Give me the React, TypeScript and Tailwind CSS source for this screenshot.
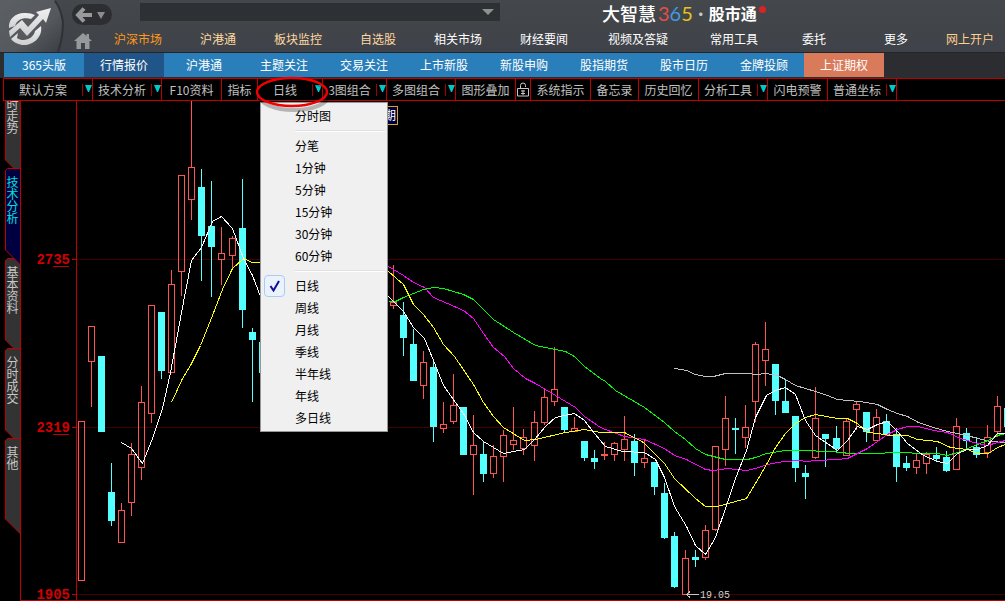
import type { ReactNode } from 'react';

const navItems = [
  { label: '沪深市场', style: 'w-20 text-[#ff9a1a]' },
  { label: '沪港通', style: 'w-20 text-[#ffd9a0]' },
  { label: '板块监控', style: 'w-20 text-[#ffd9a0]' },
  { label: '自选股', style: 'w-20 text-[#ffd9a0]' },
  { label: '相关市场', style: 'w-20 text-white' },
  { label: '财经要闻', style: 'w-[92px] text-white' },
  { label: '视频及答疑', style: 'w-24 text-white' },
  { label: '常用工具', style: 'w-24 text-white' },
  { label: '委托', style: 'w-16 text-white' },
  { label: '更多', style: 'w-[100px] text-white' },
  { label: '网上开户', style: 'w-12 text-[#ffcf8f]' },
];

const marketTabs = [
  '365头版', '行情报价', '沪港通', '主题关注', '交易关注', '上市新股',
  '新股申购', '股指期货', '股市日历', '金牌投顾', '上证期权',
];

const periodGroups = [
  ['分时图'],
  ['分笔', '1分钟', '5分钟', '15分钟', '30分钟', '60分钟'],
  ['日线', '周线', '月线', '季线', '半年线', '年线', '多日线'],
];

const sideTabs = [
  { label: '时走势', height: 78 },
  { label: '技术分析', height: 90, active: true },
  { label: '基本资料', height: 90 },
  { label: '分时成交', height: 90 },
  { label: '其他', height: 96, last: true },
];

// x, high, body top, body bottom, low, rising
type Candle = [number, number, number, number, number, 0 | 1];

const candles: Candle[] = [
  [81, 421, 421, 581, 581, 1], [91, 326, 326, 362, 407, 1], [101, 356, 356, 432, 432, 0],
  [111, 463, 492, 521, 526, 0], [121, 503, 510, 543, 543, 1], [131, 443, 454, 503, 516, 1],
  [141, 386, 402, 468, 480, 1], [151, 305, 305, 414, 423, 1], [161, 312, 312, 371, 379, 0],
  [171, 270, 284, 373, 373, 1], [181, 175, 175, 272, 296, 1], [191, 101, 167, 200, 220, 1],
  [201, 169, 187, 236, 281, 0], [211, 181, 226, 247, 297, 0], [221, 227, 253, 260, 285, 1],
  [232, 236, 238, 256, 268, 1], [242, 179, 228, 310, 328, 0], [252, 328, 332, 340, 402, 0],
  [262, 342, 342, 373, 373, 0], [393, 265, 302, 306, 309, 1], [403, 302, 315, 338, 356, 0],
  [413, 329, 344, 381, 381, 0], [423, 351, 362, 386, 399, 1], [433, 361, 367, 427, 442, 0],
  [443, 402, 424, 429, 433, 1], [453, 374, 405, 422, 424, 1], [463, 407, 407, 455, 455, 0],
  [473, 415, 445, 455, 495, 1], [483, 442, 454, 474, 482, 0], [493, 445, 456, 474, 478, 1],
  [503, 430, 435, 457, 482, 1], [513, 407, 440, 445, 450, 1], [523, 429, 437, 449, 455, 1],
  [534, 411, 422, 446, 461, 1], [544, 389, 397, 423, 425, 1], [554, 347, 389, 402, 406, 1],
  [564, 407, 407, 430, 432, 0], [574, 417, 428, 432, 432, 1], [584, 441, 441, 458, 461, 0],
  [594, 450, 458, 462, 469, 0], [604, 442, 454, 456, 460, 1], [614, 442, 443, 455, 461, 1],
  [624, 416, 439, 450, 461, 1], [634, 434, 441, 463, 476, 0], [644, 440, 458, 463, 468, 1],
  [654, 462, 462, 487, 495, 0], [664, 483, 493, 538, 539, 0], [674, 532, 536, 587, 588, 0],
  [685, 550, 558, 595, 595, 1], [695, 550, 557, 560, 567, 0], [705, 525, 530, 558, 560, 1],
  [715, 446, 446, 530, 531, 1], [725, 396, 418, 450, 466, 1], [735, 418, 428, 430, 454, 0],
  [745, 405, 427, 438, 448, 1], [755, 342, 344, 402, 422, 1], [765, 322, 349, 361, 386, 1],
  [775, 364, 364, 401, 415, 0], [785, 380, 401, 413, 413, 0], [795, 416, 416, 468, 482, 0],
  [805, 465, 473, 477, 499, 0], [815, 387, 418, 458, 459, 1], [825, 434, 434, 439, 467, 0],
  [836, 426, 438, 449, 452, 0], [846, 418, 421, 456, 456, 1], [856, 401, 404, 410, 430, 1],
  [866, 412, 412, 432, 442, 0], [876, 409, 417, 441, 441, 1], [886, 414, 421, 435, 435, 0],
  [896, 428, 434, 467, 482, 0], [906, 456, 463, 468, 471, 0], [916, 453, 460, 468, 474, 1],
  [926, 452, 454, 464, 474, 1], [936, 447, 455, 459, 461, 0], [946, 451, 457, 471, 472, 0],
  [956, 418, 426, 470, 470, 1], [966, 428, 433, 441, 448, 0], [976, 437, 447, 455, 458, 0],
  [987, 425, 437, 453, 458, 1], [997, 396, 406, 432, 437, 1], [1007, 408, 408, 427, 427, 0],
];

const averages = [
  {
    color: '#c0c0c0',
    points: '674,368 686,370 695,374 705,376 713,376 725,373 747,373 755,374 766,373 777,375 785,379 795,385 805,388 815,391 827,395 837,399 847,400 860,401 877,404 887,409 897,413 907,416 918,422 933,427 947,431 967,435 977,438 990,441 1005,442',
  },
  {
    color: '#00ff00',
    points: '388,301 395,301 403,297 423,289 433,287 443,288 463,294 473,299 483,309 493,319 513,332 535,345 555,349 565,351 574,356 584,366 600,378 605,381 615,390 644,407 664,422 674,431 685,439 695,448 705,454 725,459 747,459 755,457 766,453 785,450 800,450 830,451 850,453 880,453 890,452 910,452 913,453 937,453 947,455 957,452 967,448 977,444 990,439 997,435 1005,433',
  },
  {
    color: '#ff00ff',
    points: '388,266 403,275 413,282 424,287 433,297 447,303 463,310 473,318 483,333 493,347 504,356 513,368 525,378 535,383 555,395 575,407 584,416 600,427 605,429 624,436 644,439 664,448 674,455 686,459 705,469 713,470 727,468 746,470 755,468 767,464 783,461 800,460 805,461 817,460 837,459 847,458 857,453 867,448 877,441 887,434 897,429 907,426 918,426 933,430 947,432 960,438 977,443 987,445 997,442 1005,440',
  },
  {
    color: '#ffff00',
    points: '171,402 182,378 190,365 200,345 212,315 222,289 232,268 243,258 252,262 260,262',
  },
  {
    color: '#ffff00',
    points: '388,271 403,284 413,304 423,314 433,327 443,344 454,356 473,384 483,402 493,416 503,427 524,440 535,439 565,432 584,429 600,432 624,432 643,442 664,463 674,478 695,498 705,506 717,506 746,498 755,483 766,464 775,447 785,433 795,423 805,417 815,414 837,418 847,418 857,423 867,432 877,433 890,435 907,435 917,439 937,441 950,447 967,449 977,453 988,453 997,447 1005,444',
  },
  {
    color: '#ffffff',
    points: '121,442 131,448 142,463 152,438 162,408 170,372 175,345 181,312 191,260 201,247 212,221 221,216 232,228 243,258 252,275 260,296',
  },
  {
    color: '#ffffff',
    points: '388,296 403,311 413,327 424,338 433,360 443,385 455,402 463,413 473,432 483,441 493,447 503,453 513,451 524,449 534,439 545,426 555,417 564,415 574,413 584,420 594,433 605,446 622,451 644,452 655,459 664,477 674,506 686,526 695,545 705,554 715,537 727,502 735,478 746,450 755,417 766,395 775,390 785,387 795,394 805,420 815,435 837,450 847,440 857,426 867,429 877,424 887,421 897,431 907,443 923,455 937,461 947,463 957,453 967,449 977,449 987,445 997,433 1005,433',
  },
];

const scaleMarks = [
  { value: '2735', y: 259, underline: true },
  { value: '2319', y: 427, underline: true },
  { value: '1905', y: 594, underline: false },
];

function Logo() {
  return (
    <svg className="h-[52px] w-[68px] shrink-0" viewBox="0 0 68 52" aria-label="大智慧">
      <defs>
        <linearGradient id="logoBg" x1="0" y1="0" x2="1" y2="1">
          <stop offset="0" stopColor="#5c5f63" />
          <stop offset="0.6" stopColor="#55585c" />
          <stop offset="1" stopColor="#3a3d41" />
        </linearGradient>
        <linearGradient id="logoFg" x1="0" y1="0" x2="0" y2="1">
          <stop offset="0" stopColor="#f0f0f0" />
          <stop offset="1" stopColor="#cccecf" />
        </linearGradient>
      </defs>
      <path d="M0 0H54Q60 8 62 22Q62 38 57 52H0Z" fill="url(#logoBg)" />
      <path d="M55 1Q61 9 63 22Q63 38 58 52" fill="none" stroke="#303236" strokeWidth="2" />
      <g fill="url(#logoFg)">
        <path d="M9 28C8 19 16 12 26 13Q31 13 35 15L31 19C24 17 17 19 15 26Z" />
        <path d="M51 8L36 12L39 15L28 27L22 20L9 31L10 37L20 28L27 36L43 19L46 23Z" />
        <path d="M41 26C43 37 33 46 22 45C17 44 13 42 11 39L18 33L17 38C24 43 34 38 35 31Z" />
      </g>
    </svg>
  );
}

function Header() {
  return (
    <header className="flex h-[53px] border-b border-[#232528] bg-[#3f4247] bg-linear-to-b from-[#44474b] to-[#3f4248]">
      <Logo />
      <div className="flex w-[30px] shrink-0 flex-col items-start">
        <button
          type="button"
          aria-label="后退"
          className="mt-1 ml-1 flex h-[21px] w-10 shrink-0 items-center gap-1 rounded-full bg-[#2c2e31] pl-[3px]"
        >
          <svg className="h-4 w-[18px]" viewBox="0 0 18 16" fill="none" stroke="#97999b" strokeWidth="4">
            <path d="M17 8H4M9 1.5L3 8L9 14.5" />
          </svg>
          <svg className="h-2 w-2" viewBox="0 0 8 8" fill="#8a8c8e">
            <path d="M0 1H8L4 8Z" />
          </svg>
        </button>
        <button type="button" aria-label="首页" className="mt-2 ml-1.5">
          <svg className="h-4 w-[18px]" viewBox="0 0 18 16" fill="#96989a">
            <path d="M9 0L0 8H2.500V16H7V10H11V16H15.500V8H18L15 5.300V1H12.500V3Z" />
          </svg>
        </button>
      </div>
      <div className="flex min-w-0 grow flex-col">
        <div className="flex h-[27px] items-start">
          <button
            type="button"
            aria-label="搜索"
            className="mt-[3px] ml-[42px] flex h-[18px] w-[360px] shrink-0 items-center justify-end bg-[#2e3134] pr-1.5"
          >
            <svg className="h-1.5 w-3" viewBox="0 0 12 6" fill="#8e9092">
              <path d="M0 0H12L6 6Z" />
            </svg>
          </button>
          <div className="mt-[3px] ml-[102px] flex h-5 items-center whitespace-nowrap text-white">
            <span className="text-lg leading-5 font-medium">大智慧</span>
            <span className="ml-0.5 font-[Lato] text-xl leading-5">
              <span className="text-[#e0504a]">3</span>
              <span className="text-[#3f9be0]">6</span>
              <span className="text-[#e8c020]">5</span>
            </span>
            <span className="w-4 text-center text-base leading-5 text-[#c8c8c8]">·</span>
            <span className="text-base leading-5 font-bold">股市通</span>
            <span className="mb-2 ml-0.5 h-[7px] w-[7px] rounded-full bg-[#d82424]" />
          </div>
        </div>
        <nav className="flex h-6 items-center">
          {navItems.map((item) => (
            <a key={item.label} href="#" className={`shrink-0 text-center whitespace-nowrap ${item.style}`}>
              {item.label}
            </a>
          ))}
        </nav>
      </div>
    </header>
  );
}

function MarketTabs() {
  const getColour = (i: number) => {
    if (i === 1) return 'bg-[#1f5588]';
    if (i === marketTabs.length - 1) return 'bg-[#d97a5a]';
    return 'bg-[#2a7fba]';
  };

  return (
    <nav className="flex h-[25px] bg-[#2b2d30] pb-px pl-1">
      {marketTabs.map((label, i) => (
        <a key={label} href="#" className={`w-20 text-center leading-6 text-white ${getColour(i)}`}>
          {label}
        </a>
      ))}
    </nav>
  );
}

interface ToolProps {
  label?: string;
  arrow?: boolean;
  className?: string;
  children?: ReactNode;
}

function Tool({ label, arrow = false, className = '', children }: ToolProps) {
  return (
    <div className="relative flex shrink-0 border-r border-[#c00000]">
      <button type="button" className={`flex items-center justify-center whitespace-nowrap ${className}`}>
        {label}
        {!label && children}
      </button>
      {arrow && (
        <span className="flex items-center">
          <span className="h-3 w-px bg-[#a00000]" />
          <svg className="mb-0.5 ml-0.5 h-[7px] w-[7px]" viewBox="0 0 7 7" fill="#00c8c8">
            <path d="M0 0H7L4 7H3Z" />
          </svg>
        </span>
      )}
      {label && children}
    </div>
  );
}

function PeriodMenu() {
  return (
    <div
      role="menu"
      className="absolute top-[23px] left-0.5 z-20 w-32 border border-[#979797] bg-[#f0f0f0] p-0.5 text-black"
    >
      {periodGroups.map((group, i) => (
        <div key={group[0]}>
          {i > 0 && (
            <div className="flex h-2 items-center pl-8">
              <div className="h-0.5 w-full border-t border-[#e0e0e0] bg-white" />
            </div>
          )}
          {group.map((item) => (
            <button key={item} type="button" role="menuitem" className="flex h-[22px] w-full items-center text-left">
              <span className="mr-2.5 ml-px flex h-[22px] w-[21px] items-center justify-center">
                {item === '日线' && (
                  <span className="flex h-[22px] w-[21px] items-center justify-center rounded-sm border border-[#a8cdf5] bg-[#eaf2fb]">
                    <svg className="h-3 w-3" viewBox="0 0 12 12" fill="none" stroke="#10109a" strokeWidth="2">
                      <path d="M1.500 6L4.500 10.500L10 1" />
                    </svg>
                  </span>
                )}
              </span>
              {item}
            </button>
          ))}
        </div>
      ))}
    </div>
  );
}

function Toolbar() {
  return (
    <div className="ml-[3px] flex h-[23px] border border-r-0 border-[#c00000] bg-black text-[#c0c0c0]">
      <Tool label="默认方案" arrow className="w-[78px]" />
      <Tool label="技术分析" arrow className="w-[58px]" />
      <Tool label="F10资料" className="w-[59px]" />
      <Tool label="指标" className="w-[35px]" />
      <Tool label="日线" arrow className="w-[54px]">
        <PeriodMenu />
        <svg className="pointer-events-none absolute -top-1 -left-1 z-30 h-11 w-20" viewBox="0 0 80 44" fill="none">
          <ellipse cx="40" cy="20" rx="35" ry="15" stroke="#000" strokeOpacity="0.25" strokeWidth="4" />
          <ellipse cx="38" cy="17" rx="35" ry="14" stroke="#f00000" strokeWidth="2.500" />
        </svg>
      </Tool>
      <Tool label="3图组合" arrow className="w-[53px]" />
      <Tool label="多图组合" arrow className="w-[58px]" />
      <Tool label="图形叠加" className="w-[59px]" />
      <Tool className="w-3.5">
        <svg className="h-[15px] w-3" viewBox="0 0 12 15" fill="none" stroke="#c8c8c8" aria-label="锁定">
          <path d="M3.500 7V3.500Q3.500 1 6 1Q8.500 1 8.500 3.500V5" />
          <path d="M0.500 6.500H11.500V14H0.500ZM4 9H8M4 11.500H8M6 8V13" />
        </svg>
      </Tool>
      <Tool label="系统指示" className="w-[59px]" />
      <Tool label="备忘录" className="w-[47px]" />
      <Tool label="历史回忆" className="w-[59px]" />
      <Tool label="分析工具" arrow className="w-[58px]" />
      <Tool label="闪电预警" className="w-[59px]" />
      <Tool label="普通坐标" arrow className="w-[58px]" />
    </div>
  );
}

function SideTabs() {
  return (
    <div className="w-[21px] shrink-0 overflow-hidden border-r border-[#c00000] pl-[5px]">
      <div className="-mt-[11px]">
        {sideTabs.map((tab) => {
          const bottom = tab.height + (tab.last ? 0 : 7);
          return (
            <button
              key={tab.label}
              type="button"
              className={`relative flex w-full justify-center pt-2 ${
                tab.active ? 'z-10 text-[#00e0e0]' : 'text-[#c8c8c8]'
              }`}
              style={{ height: tab.height }}
            >
              <svg
                className="absolute top-0 left-0 w-full overflow-visible"
                height={bottom}
                fill={tab.active ? '#000040' : '#333333'}
                stroke="#c00000"
              >
                <path d={`M15.500 0.500H2.500L0.500 2.500V${bottom - 15}L15.500 ${bottom}`} />
              </svg>
              <span className="relative w-3 leading-3 break-all">{tab.label}</span>
            </button>
          );
        })}
      </div>
    </div>
  );
}

function CandleShape({ candle }: { candle: Candle }) {
  const [x, high, top, bottom, low, rising] = candle;
  const color = rising ? '#ff5454' : '#54ffff';

  return (
    <g fill={color}>
      {high < top && <rect x={x} y={high} width={1} height={top - high} />}
      {low > bottom && <rect x={x} y={bottom} width={1} height={low - bottom} />}
      {rising ? (
        <rect x={x - 2.5} y={top + 0.5} width={6} height={bottom - top - 1} fill="none" stroke={color} />
      ) : (
        <rect x={x - 3} y={top} width={7} height={bottom - top} />
      )}
    </g>
  );
}

function Chart() {
  return (
    <svg className="block w-full" viewBox="21 101 984 500" shapeRendering="crispEdges">
      {scaleMarks.map((mark) => (
        <g key={mark.value}>
          <rect x={77} y={mark.y} width={928} height={1} fill="#400000" />
          <rect x={72} y={mark.y} width={5} height={1} fill="#c00000" />
          <text
            x={70}
            y={mark.y + 5}
            textAnchor="end"
            className="font-['Liberation_Mono',monospace] text-[14px] font-bold"
            fill="#d00000"
          >
            {mark.value}
          </text>
          {mark.underline && <rect x={53} y={mark.y + 7} width={16} height={1} fill="#c00000" />}
        </g>
      ))}
      <rect x={76} y={101} width={1} height={500} fill="#c00000" />
      <rect x={21} y={600} width={984} height={1} fill="#c00000" />

      {candles.map((candle) => (
        <CandleShape key={candle[0]} candle={candle} />
      ))}

      {averages.map((line) => (
        <polyline key={line.points} points={line.points} fill="none" stroke={line.color} transform="translate(0.5 0.5)" />
      ))}

      {/* lowest price marker */}
      <path d="M686 594.500H699M690 591.500L686.500 594.500L690 597.500" fill="none" stroke="#c8c8c8" />
      <text x={700} y={598} className="font-['Liberation_Mono',monospace] text-[10px]" fill="#d0d0d0">
        19.05
      </text>

      <rect x={372.5} y={106.5} width={25} height={18} fill="#000040" stroke="#d8a818" />
      <text x={384} y={120} className="text-xs" fill="#ffffff">
        期
      </text>
    </svg>
  );
}

export default function App() {
  return (
    <div className="min-h-screen overflow-hidden bg-black font-['Noto_Sans_CJK_SC',sans-serif] text-xs">
      <Header />
      <MarketTabs />
      <Toolbar />
      <main className="flex">
        <SideTabs />
        <div className="min-w-0 grow">
          <Chart />
        </div>
      </main>
    </div>
  );
}
